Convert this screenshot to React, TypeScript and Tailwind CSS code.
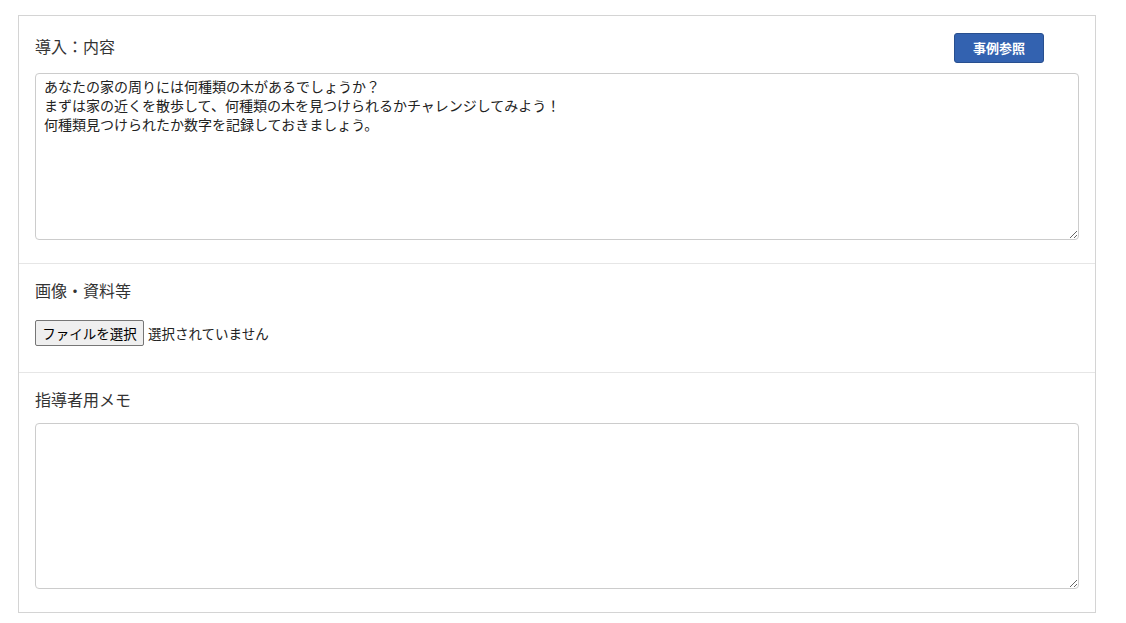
import React from "react";

const intro =
  "あなたの家の周りには何種類の木があるでしょうか？\nまずは家の近くを散歩して、何種類の木を見つけられるかチャレンジしてみよう！\n何種類見つけられたか数字を記録しておきましょう。";

export default function App() {
  return (
    <div
      className="min-h-screen bg-white pt-[15px] pl-[18px] text-[#333]"
      style={{ fontFamily: '"Noto Sans CJK JP", "Noto Sans", sans-serif' }}
    >
      <div className="w-[1078px] border border-[#d4d4d4]">
        {/* 導入 */}
        <section className="border-b border-[#e6e6e6] px-4 pt-[17px] pb-[23px]">
          <div className="flex h-[30px] items-center justify-between">
            <label className="-mt-[5px] text-[16px]">導入：内容</label>
            <button className="mr-[35px] h-[30px] w-[90px] rounded-[3px] border border-[#284f8f] bg-[#3362b0] text-[13px] font-bold text-white">
              事例参照
            </button>
          </div>
          <textarea
            defaultValue={intro}
            className="mt-[10px] block h-[167px] w-full rounded-[4px] border border-[#cccccc] px-2 py-[3px] text-[14px] leading-[19px] text-[#222] outline-none"
          />
        </section>

        {/* 画像・資料等 */}
        <section className="border-b border-[#e6e6e6] px-4 pt-[16px] pb-[26px]">
          <label className="block text-[16px] leading-[20px]">画像・資料等</label>
          <div className="mt-[20px] flex items-center gap-[4px]">
            <span className="flex h-[26px] w-[109px] items-center justify-center rounded-[2px] border border-[#767676] bg-[#efefef] text-[13.5px] text-black">
              ファイルを選択
            </span>
            <span className="text-[13.5px] text-[#222]">選択されていません</span>
          </div>
        </section>

        {/* 指導者用メモ */}
        <section className="px-4 pt-[16px] pb-[23px]">
          <label className="block text-[16px] leading-[20px]">指導者用メモ</label>
          <textarea className="mt-[14px] block h-[166px] w-full rounded-[4px] border border-[#cccccc] px-2 py-[4px] text-[14px] outline-none" />
        </section>
      </div>
    </div>
  );
}
